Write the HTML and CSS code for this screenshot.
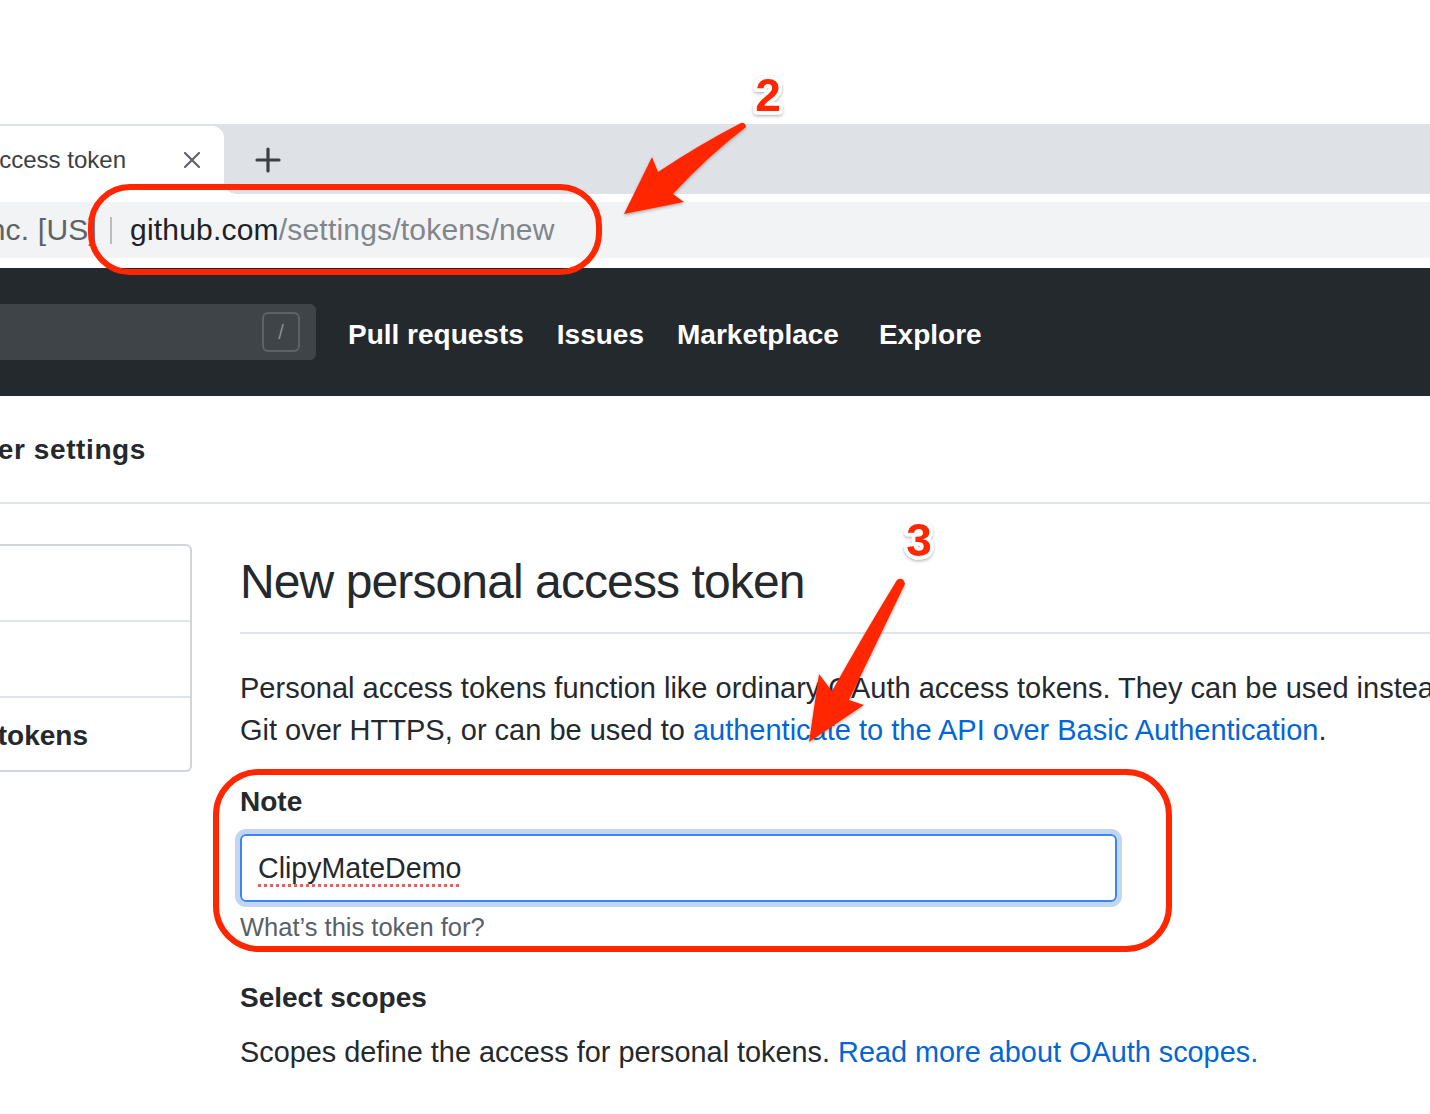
FILE: index.html
```html
<!DOCTYPE html>
<html lang="en">
<head>
<meta charset="utf-8">
<title>New personal access token</title>
<link rel="stylesheet" href="styles.css">
</head>
<body>
<div class="page">
  <div class="blank"></div>

  <div class="tabstrip">
    <div class="tab">
      <div class="tab-title clip-end"><span>New personal access token</span></div>
      <svg class="tab-close" width="18" height="18" viewBox="0 0 18 18"><path d="M2 2 L16 16 M16 2 L2 16" stroke="#5f6368" stroke-width="2.2" stroke-linecap="round"/></svg>
    </div>
    <svg class="newtab" width="26" height="26" viewBox="0 0 26 26"><path d="M13 2 V24 M2 13 H24" stroke="#3c4043" stroke-width="3.2" stroke-linecap="round"/></svg>
  </div>

  <div class="toolbar">
    <div class="omnibox">
      <div class="cert clip-end"><span>GitHub, Inc. [US]</span></div>
      <span class="sep"></span>
      <span class="url"><span class="host">github.com</span>/settings/tokens/new</span>
    </div>
  </div>

  <header class="gh-nav">
    <div class="search"><span class="key">/</span></div>
    <nav class="links">
      <a class="link">Pull requests</a>
      <a class="link">Issues</a>
      <a class="link">Marketplace</a>
      <a class="link explore">Explore</a>
    </nav>
  </header>

  <div class="settings-head">
    <div class="settings-title clip-end"><span>Developer settings</span></div>
  </div>

  <div class="main">
    <aside class="menu">
      <div class="menu-row"></div>
      <div class="menu-row"></div>
      <div class="menu-row selected"><div class="menu-text clip-end"><span>Personal access tokens</span></div></div>
    </aside>

    <section class="content">
      <h1 class="title">New personal access token</h1>
      <p class="intro">Personal access tokens function like ordinary OAuth access tokens. They can be used instead of a password for<br>Git over HTTPS, or can be used to <a class="blue">authenticate to the API over Basic Authentication</a>.</p>

      <div class="field">
        <label class="label">Note</label>
        <div class="input"><span class="typed">ClipyMateDemo</span></div>
        <p class="help">What’s this token for?</p>
      </div>

      <h3 class="sub">Select scopes</h3>
      <p class="desc">Scopes define the access for personal tokens. <a class="blue">Read more about OAuth scopes.</a></p>
    </section>
  </div>
</div>

<svg class="annot" width="1430" height="1114" viewBox="0 0 1430 1114">
  <defs>
    <filter id="sh" x="-20%" y="-20%" width="140%" height="140%">
      <feDropShadow dx="0" dy="1.5" stdDeviation="1.5" flood-color="#000" flood-opacity="0.3"/>
    </filter>
  </defs>
  <rect x="91" y="187" width="508" height="85" rx="39" ry="39" fill="none" stroke="#ff2600" stroke-width="6"/>
  <rect x="216" y="772" width="953" height="177" rx="43" ry="43" fill="none" stroke="#ff2600" stroke-width="6"/>
  <path filter="url(#sh)" fill="#ff2600" d="M741 123 Q745 122 746 127 Q708 156 673 194 L684 202 L624 214 L652 157 L658 172 Q700 144 741 123 Z"/>
  <path filter="url(#sh)" fill="#ff2600" d="M897 580 Q903 576 905 584 Q878 640 849 700 L864 705 L809 742 L819 674 L832 691 Q865 632 897 580 Z"/>
  <text class="num" x="768" y="111" filter="url(#sh)">2</text>
  <text class="num" x="919" y="556" filter="url(#sh)">3</text>
</svg>
</body>
</html>
```

FILE: styles.css
```css
html, body {
  margin: 0;
  padding: 0;
}
body {
  width: 1430px;
  height: 1114px;
  overflow: hidden;
  position: relative;
  background: #fff;
  font-family: "Liberation Sans", Arial, sans-serif;
  color: #24292e;
}
.page {
  width: 1430px;
}
.clip-end {
  display: flex;
  justify-content: flex-end;
  overflow: hidden;
  white-space: nowrap;
  flex: none;
}
.clip-end > span {
  flex: none;
}

.blank {
  height: 124px;
}

/* Tab strip */
.tabstrip {
  height: 70px;
  background: #dee1e6;
  display: flex;
  align-items: flex-end;
}
.tab {
  position: relative;
  width: 224px;
  height: 68px;
  background: #fff;
  border-radius: 0 12px 0 0;
  display: flex;
  align-items: center;
  box-sizing: border-box;
}
.tab::after {
  content: "";
  position: absolute;
  right: -12px;
  bottom: 0;
  width: 12px;
  height: 12px;
  background: radial-gradient(circle at 100% 0, transparent 11.5px, #fff 12px);
}
.tab-title {
  width: 126px;
  font-size: 24px;
  color: #3c4043;
}
.tab-close {
  margin-left: 57px;
}
.newtab {
  align-self: center;
  margin-left: 31px;
  margin-top: 2px;
}

/* toolbar */
.toolbar {
  height: 74px;
  background: #fff;
  padding-top: 8px;
  box-sizing: border-box;
}
.omnibox {
  height: 56px;
  background: #f1f3f4;
  display: flex;
  align-items: center;
  font-size: 30px;
  letter-spacing: 0.2px;
}
.cert {
  width: 97px;
  color: #5f6368;
}
.sep {
  width: 2px;
  height: 27px;
  background: #b9bcc0;
  margin-left: 13px;
}
.url {
  margin-left: 18px;
  color: #80868b;
  white-space: nowrap;
}
.host {
  color: #202124;
}

/* GitHub nav */
.gh-nav {
  height: 128px;
  background: #24292e;
  display: flex;
  align-items: center;
}
.search {
  width: 316px;
  height: 56px;
  background: #3f4448;
  border-radius: 0 6px 6px 0;
  display: flex;
  align-items: center;
  justify-content: flex-end;
  padding-right: 16px;
  box-sizing: border-box;
}
.key {
  width: 38px;
  height: 40px;
  box-sizing: border-box;
  border: 2px solid #5d6268;
  border-radius: 6px;
  color: #8a9096;
  font-size: 20px;
  display: flex;
  align-items: center;
  justify-content: center;
}
.links {
  display: flex;
  align-items: center;
  margin-left: 32px;
  padding-top: 5px;
}
.link {
  color: #fff;
  font-weight: bold;
  font-size: 28px;
  margin-right: 33px;
  white-space: nowrap;
}
.link.explore {
  margin-left: 7px;
}

/* settings header */
.settings-head {
  height: 106px;
  border-bottom: 2px solid #e1e4e8;
  display: flex;
  align-items: center;
}
.settings-title {
  width: 146px;
  font-size: 28px;
  font-weight: bold;
  letter-spacing: 0.6px;
  color: #24292e;
  margin-top: 2px;
}

/* main */
.main {
  display: flex;
  align-items: flex-start;
}
.menu {
  width: 192px;
  box-sizing: border-box;
  margin-top: 40px;
  border: 2px solid #d1d5da;
  border-left: none;
  border-radius: 0 6px 6px 0;
  flex: none;
}
.menu-row {
  height: 74px;
  border-bottom: 2px solid #e1e4e8;
  display: flex;
  align-items: center;
}
.menu-row.selected {
  height: 72px;
  border-bottom: none;
  padding-top: 4px;
  box-sizing: border-box;
}
.menu-text {
  width: 88px;
  font-size: 28px;
  font-weight: bold;
  color: #24292e;
}

.content {
  margin-left: 48px;
  flex: 1;
  min-width: 0;
}
.title {
  margin: 47px 0 0;
  font-size: 48px;
  font-weight: normal;
  line-height: 62px;
  letter-spacing: -0.9px;
  padding-bottom: 19px;
  border-bottom: 2px solid #e1e4e8;
  white-space: nowrap;
}
.intro {
  margin: 33px 0 0;
  font-size: 29px;
  line-height: 42px;
  white-space: nowrap;
}
.blue {
  color: #0366d6;
}
.field {
  margin-top: 30px;
}
.label {
  display: block;
  font-size: 28px;
  font-weight: bold;
  line-height: 42px;
}
.input {
  margin-top: 11px;
  width: 877px;
  height: 68px;
  box-sizing: border-box;
  border: 2px solid #3b86f7;
  border-radius: 6px;
  box-shadow: 0 0 0 5px #c2d6f3;
  display: flex;
  align-items: center;
  padding-left: 16px;
  font-size: 28.6px;
  color: #24292e;
}
.typed {
  text-decoration: underline dotted #e86060;
  text-decoration-thickness: 3px;
  text-underline-offset: 6px;
}
.help {
  margin: 8px 0 0;
  font-size: 25.5px;
  line-height: 34px;
  color: #586069;
}
.sub {
  margin: 33px 0 0;
  font-size: 28px;
  font-weight: bold;
  line-height: 42px;
}
.desc {
  margin: 12px 0 0;
  font-size: 28.85px;
  line-height: 42px;
  white-space: nowrap;
}

/* annotation overlay */
.annot {
  position: absolute;
  left: 0;
  top: 0;
  pointer-events: none;
}
.num {
  font-family: "Liberation Sans", Arial, sans-serif;
  font-weight: bold;
  font-size: 46px;
  fill: #ff2600;
  stroke: #fff;
  stroke-width: 7px;
  stroke-linejoin: round;
  paint-order: stroke fill;
  text-anchor: middle;
}
```
